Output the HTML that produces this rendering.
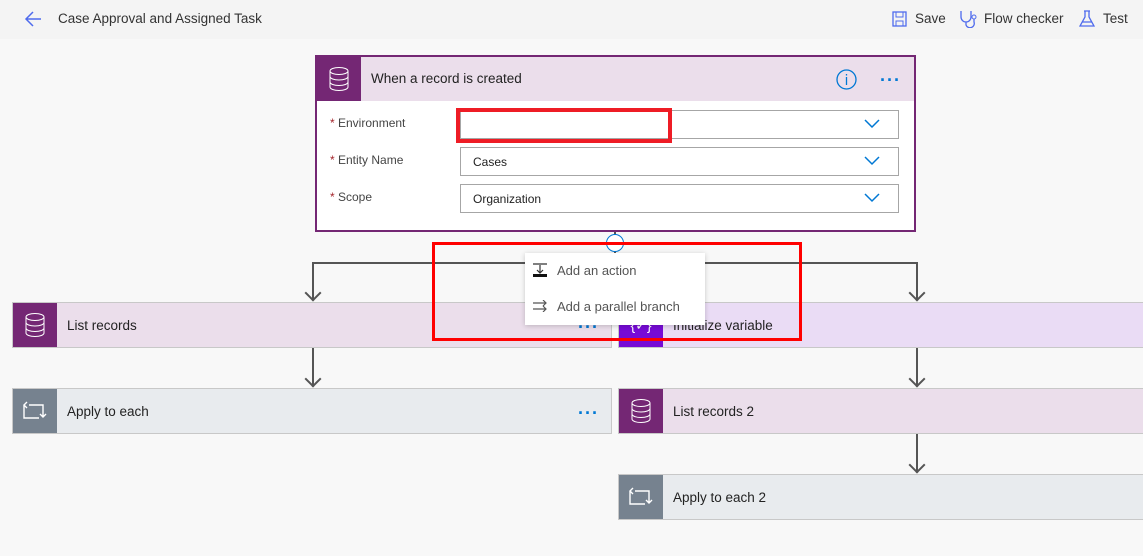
<!DOCTYPE html>
<html><head><meta charset="utf-8"><style>
*{box-sizing:border-box;margin:0;padding:0}
body{width:1143px;height:556px;overflow:hidden;background:#f8f8f8;font-family:"Segoe UI","Liberation Sans",sans-serif;color:#222;position:relative}
.abs{position:absolute}
.top{left:0;top:0;width:1143px;height:39px;background:#f4f4f4}
.t{font-size:13.5px;color:#333}
.card{position:absolute;height:46px;border:1px solid #c8c8c8;display:flex;align-items:center}
.ic{width:44px;height:44px;display:flex;align-items:center;justify-content:center}
.card .lbl{margin-left:10px;font-size:13.5px;color:#222}
.vl{position:absolute;width:2px;background:#555}
.arr{position:absolute;width:12px;height:12px;border-right:2px solid #555;border-bottom:2px solid #555;transform:rotate(45deg)}
.inp{position:absolute;left:460px;width:439px;height:29px;border:1px solid #a6a6a6;background:#fff;font-size:12px;padding:7px 12px}
.fl{position:absolute;left:330px;font-size:12px;color:#444}
.fl b{color:#a4262c;font-weight:normal}
.chev{position:absolute;right:18px;top:8px}
.dots{position:absolute;color:#0078d4;font-size:18px;letter-spacing:1px;font-weight:bold}
</style></head><body>
<div class="abs top"></div>
<svg class="abs" style="left:24px;top:11px" width="18" height="16"><path d="M9 1L2 8L9 15M2 8H17" stroke="#4f6bed" stroke-width="1.5" fill="none"/></svg>
<div class="abs t" style="left:58px;top:11px">Case Approval and Assigned Task</div>
<svg class="abs" style="left:892px;top:11px" width="15" height="16"><rect x="1" y="1" width="13" height="14" fill="none" stroke="#4f6bed" stroke-width="1.3"/><rect x="4" y="1" width="7" height="5" fill="none" stroke="#4f6bed"/><rect x="4" y="10" width="7" height="5" fill="none" stroke="#4f6bed"/></svg>
<div class="abs t" style="left:915px;top:11px">Save</div>
<svg class="abs" style="left:959px;top:10px" width="18" height="18"><path d="M2 1V7A5 5 0 0 0 12 7V1M7 12V15A4 4 0 0 0 15 12V9" stroke="#4f6bed" fill="none" stroke-width="1.3"/><circle cx="15" cy="7" r="2" stroke="#4f6bed" fill="none"/></svg>
<div class="abs t" style="left:984px;top:11px">Flow checker</div>
<svg class="abs" style="left:1079px;top:10px" width="16" height="18"><path d="M5 1H11M6 1V7L1 16H15L10 7V1M3 12H13" stroke="#4f6bed" fill="none" stroke-width="1.3"/></svg>
<div class="abs t" style="left:1103px;top:11px">Test</div>

<!-- trigger -->
<div class="abs" style="left:315px;top:55px;width:601px;height:177px;border:2px solid #742774;background:#fff"></div>
<div class="abs" style="left:317px;top:57px;width:597px;height:44px;background:#ebdeeb"></div>
<div class="abs ic" style="left:317px;top:57px;background:#742774"><svg width="22" height="26"><ellipse cx="11" cy="5" rx="9" ry="3.5" fill="none" stroke="#fff"/><path d="M2 5V21A9 3.5 0 0 0 20 21V5M2 10.5A9 3.5 0 0 0 20 10.5M2 16A9 3.5 0 0 0 20 16" fill="none" stroke="#fff"/></svg></div>
<div class="abs" style="left:371px;top:71px;font-size:13.5px">When a record is created</div>
<svg class="abs" style="left:836px;top:69px" width="21" height="21"><circle cx="10.5" cy="10.5" r="9.5" fill="none" stroke="#0078d4" stroke-width="1.3"/><path d="M10.5 8V16M10.5 5V6.5" stroke="#0078d4" stroke-width="1.3"/></svg>
<div class="dots" style="left:880px;top:70px">···</div>
<div class="fl" style="top:116px"><b>*</b> Environment</div>
<div class="fl" style="top:153px"><b>*</b> Entity Name</div>
<div class="fl" style="top:190px"><b>*</b> Scope</div>
<div class="inp" style="top:110px"><svg class="chev" width="16" height="10"><path d="M1 1L8 8L15 1" stroke="#0078d4" fill="none" stroke-width="1.5"/></svg></div>
<div class="inp" style="top:147px">Cases<svg class="chev" width="16" height="10"><path d="M1 1L8 8L15 1" stroke="#0078d4" fill="none" stroke-width="1.5"/></svg></div>
<div class="inp" style="top:184px">Organization<svg class="chev" width="16" height="10"><path d="M1 1L8 8L15 1" stroke="#0078d4" fill="none" stroke-width="1.5"/></svg></div>
<div class="abs" style="left:456px;top:108px;width:216px;height:35px;border:4px solid #ee1c25"></div>

<!-- connectors -->
<div class="abs" style="left:312px;top:262px;width:606px;height:2px;background:#555"></div>
<div class="vl" style="left:614px;top:232px;height:31px"></div>
<div class="abs" style="left:606px;top:234px;width:18px;height:18px;border-radius:50%;border:1px solid #0078d4;background:#fff"></div>
<div class="vl" style="left:312px;top:262px;height:38px"></div><div class="arr" style="left:307px;top:287px"></div>
<div class="vl" style="left:916px;top:262px;height:38px"></div><div class="arr" style="left:911px;top:287px"></div>
<div class="vl" style="left:312px;top:348px;height:38px"></div><div class="arr" style="left:307px;top:373px"></div>
<div class="vl" style="left:916px;top:348px;height:38px"></div><div class="arr" style="left:911px;top:373px"></div>
<div class="vl" style="left:916px;top:434px;height:38px"></div><div class="arr" style="left:911px;top:459px"></div>

<!-- cards -->
<div class="card" style="left:12px;top:302px;width:600px;background:#ebdeeb"><div class="ic" style="background:#742774"><svg width="22" height="26"><ellipse cx="11" cy="5" rx="9" ry="3.5" fill="none" stroke="#fff"/><path d="M2 5V21A9 3.5 0 0 0 20 21V5M2 10.5A9 3.5 0 0 0 20 10.5M2 16A9 3.5 0 0 0 20 16" fill="none" stroke="#fff"/></svg></div><span class="lbl">List records</span></div>
<div class="dots" style="left:578px;top:317px">···</div>
<div class="card" style="left:12px;top:388px;width:600px;background:#e8ebee"><div class="ic" style="background:#76828f"><svg width="24" height="20"><path d="M6 4H20V16M17 13L20 16L23 13M4 1L1 4L4 7M1 4V17H16" stroke="#fff" fill="none" stroke-width="1.4"/></svg></div><span class="lbl">Apply to each</span></div>
<div class="dots" style="left:578px;top:403px">···</div>
<div class="card" style="left:618px;top:302px;width:530px;background:#eadcf5"><div class="ic" style="background:#770bd6"><span style="color:#fff;font-size:14px">{✓}</span></div><span class="lbl">Initialize variable</span></div>
<div class="card" style="left:618px;top:388px;width:530px;background:#ebdeeb"><div class="ic" style="background:#742774"><svg width="22" height="26"><ellipse cx="11" cy="5" rx="9" ry="3.5" fill="none" stroke="#fff"/><path d="M2 5V21A9 3.5 0 0 0 20 21V5M2 10.5A9 3.5 0 0 0 20 10.5M2 16A9 3.5 0 0 0 20 16" fill="none" stroke="#fff"/></svg></div><span class="lbl">List records 2</span></div>
<div class="card" style="left:618px;top:474px;width:530px;background:#e8ebee"><div class="ic" style="background:#76828f"><svg width="24" height="20"><path d="M6 4H20V16M17 13L20 16L23 13M4 1L1 4L4 7M1 4V17H16" stroke="#fff" fill="none" stroke-width="1.4"/></svg></div><span class="lbl">Apply to each 2</span></div>

<!-- menu -->
<div class="abs" style="left:525px;top:253px;width:180px;height:72px;background:#fff;box-shadow:0 1px 5px rgba(0,0,0,.2)"></div>
<svg class="abs" style="left:532px;top:263px" width="16" height="15"><path d="M1 1H15M8 2V10M5 7L8 10L11 7" stroke="#333" fill="none" stroke-width="1.2"/><rect x="1" y="11" width="14" height="3" fill="#111"/></svg>
<div class="abs" style="left:557px;top:263px;font-size:13px;color:#555">Add an action</div>
<svg class="abs" style="left:532px;top:300px" width="16" height="12"><path d="M1 3H14M11 0L14 3L11 6M1 9H14M11 6L14 9L11 12" stroke="#555" fill="none" stroke-width="1.2"/></svg>
<div class="abs" style="left:557px;top:299px;font-size:13px;color:#555">Add a parallel branch</div>
<div class="abs" style="left:432px;top:242px;width:370px;height:99px;border:3px solid #ff0000"></div>
</body></html>
